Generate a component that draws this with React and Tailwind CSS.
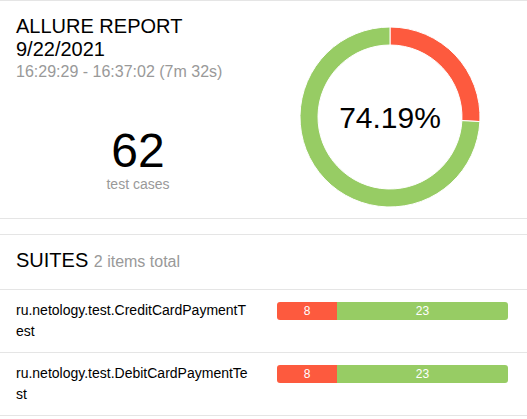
const suites = [
  { name: "ru.netology.test.CreditCardPaymentTest", failed: 8, passed: 23 },
  { name: "ru.netology.test.DebitCardPaymentTest", failed: 8, passed: 23 },
];

function Donut() {
  return (
    <svg width="184" height="184" viewBox="-92 -92 184 184">
      <path
        d="M0,-90 A90,90 0 0,1 89.88,4.55 L71.9,3.64 A72,72 0 0,0 0,-72 Z"
        fill="#fd5a3e"
        stroke="#fff"
        strokeWidth="1"
      />
      <path
        d="M89.88,4.55 A90,90 0 1,1 0,-90 L0,-72 A72,72 0 1,0 71.9,3.64 Z"
        fill="#97cc64"
        stroke="#fff"
        strokeWidth="1"
      />
      <text
        x="0"
        y="11"
        textAnchor="middle"
        fontSize="30"
        fill="#000"
        fontFamily="'Liberation Sans', Arial, sans-serif"
      >
        74.19%
      </text>
    </svg>
  );
}

export default function App() {
  return (
    <div className="w-[527px] h-[419px] overflow-hidden bg-white text-black font-['Liberation_Sans',Arial,sans-serif]">
      <section className="flex h-[219px] border-y border-[#e5e5e5]">
        <div className="w-[276px] pl-4 pt-[14px]">
          <h2 className="text-[20px] leading-[23px]">
            ALLURE REPORT
            <br />
            9/22/2021
          </h2>
          <p className="text-[16px] leading-[22px] text-[#999]">16:29:29 - 16:37:02 (7m 32s)</p>
          <div className="mt-[44px] flex w-[244px] flex-col items-center">
            <span className="text-[48px] leading-[48px]">62</span>
            <span className="text-[14px] leading-[18px] text-[#999]">test cases</span>
          </div>
        </div>
        <div className="flex-1 pl-[22px] pt-[24px]">
          <Donut />
        </div>
      </section>

      <section className="mt-[15px] border-t border-[#e5e5e5]">
        <h2 className="px-4 pt-[13px] pb-[15px] text-[20px] leading-[24px]">
          SUITES <span className="text-[16px] text-[#999]">2 items total</span>
        </h2>
        {suites.map((s) => (
          <div key={s.name} className="flex px-4 pt-[10px] pb-[10px] border-t border-[#e5e5e5]">
            <div className="w-[236px] break-all text-[14px] leading-[21px]">{s.name}</div>
            <div className="ml-[25px] mt-[2px] flex h-[18px] w-[231px] overflow-hidden rounded-[3px] text-[12px] leading-[18px] text-white">
              <div className="w-[60px] bg-[#fd5a3e] text-center">{s.failed}</div>
              <div className="flex-1 bg-[#97cc64] text-center">{s.passed}</div>
            </div>
          </div>
        ))}
        <div className="border-t border-[#e5e5e5]" />
      </section>
    </div>
  );
}
